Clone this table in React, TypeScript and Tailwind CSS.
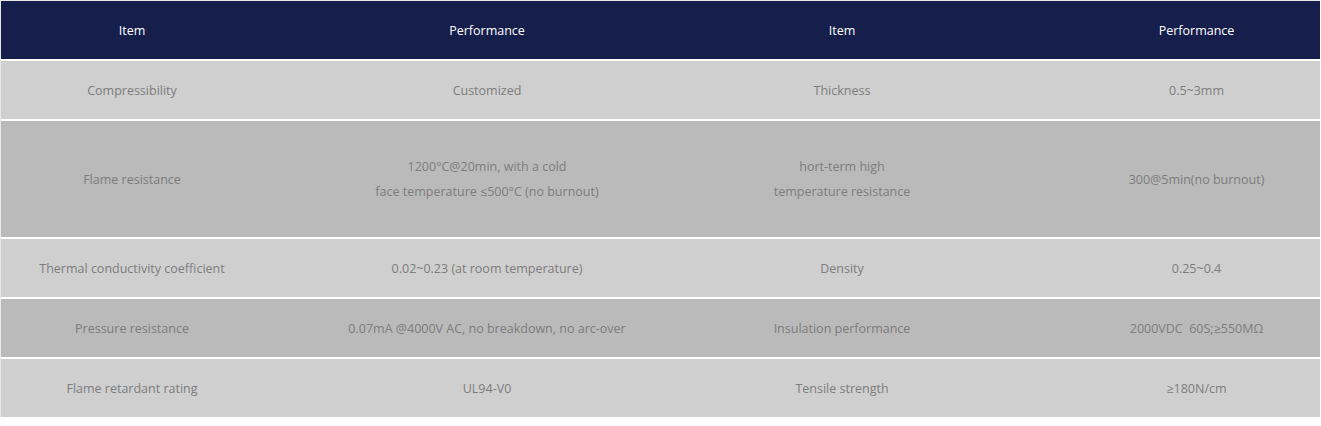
import React from 'react';

type Row = { cells: string[][]; tall?: boolean; dark?: boolean };

const rows: Row[] = [
  { cells: [['Compressibility'], ['Customized'], ['Thickness'], ['0.5~3mm']] },
  {
    dark: true,
    tall: true,
    cells: [
      ['Flame resistance'],
      ['1200°C@20min, with a cold', 'face temperature ≤500°C (no burnout)'],
      ['hort-term high', 'temperature resistance'],
      ['300@5min(no burnout)'],
    ],
  },
  { cells: [['Thermal conductivity coefficient'], ['0.02~0.23 (at room temperature)'], ['Density'], ['0.25~0.4']] },
  {
    dark: true,
    cells: [['Pressure resistance'], ['0.07mA @4000V AC, no breakdown, no arc-over'], ['Insulation performance'], ['2000VDC  60S;≥550MΩ']],
  },
  { cells: [['Flame retardant rating'], ['UL94-V0'], ['Tensile strength'], ['≥180N/cm']] },
];

const cols = 'grid grid-cols-[262px_448px_262px_1fr]';

function Cell({ lines, last }: { lines: string[]; last?: boolean }) {
  return (
    <div className={`flex flex-col items-center justify-center text-center leading-[25px] ${last ? 'pl-[100px]' : ''}`}>
      {lines.map((l) => (
        <span key={l} className="whitespace-pre">{l}</span>
      ))}
    </div>
  );
}

export default function App() {
  return (
    <div className="w-[1321px] h-[426px] bg-white font-['Open_Sans',sans-serif] text-[12.5px]">
      <div className="w-[1320px] border-t border-l border-[#e8e8e8] flex flex-col gap-[2px]">
        {/* header */}
        <div className={`${cols} h-[58px] bg-[#161e4b] text-white`}>
          <Cell lines={['Item']} />
          <Cell lines={['Performance']} />
          <Cell lines={['Item']} />
          <Cell lines={['Performance']} last />
        </div>

        {rows.map((r, i) => (
          <div
            key={i}
            className={`${cols} ${r.tall ? 'h-[116px]' : 'h-[58px]'} ${r.dark ? 'bg-[#bababa]' : 'bg-[#cfcfcf]'} text-[#7d7d7d]`}
          >
            {r.cells.map((c, j) => (
              <Cell key={j} lines={c} last={j === 3} />
            ))}
          </div>
        ))}
      </div>
    </div>
  );
}
